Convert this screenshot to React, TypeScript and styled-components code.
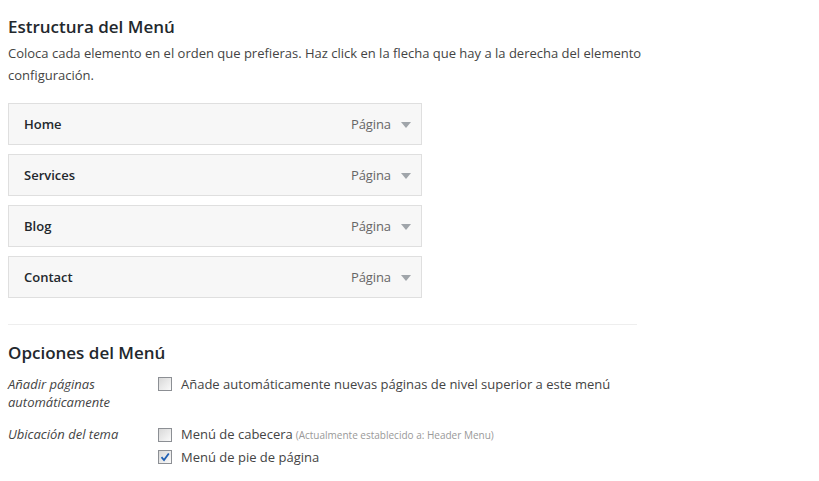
import React from "react";
import styled, { createGlobalStyle } from "styled-components";

const GlobalStyle = createGlobalStyle`
  body {
    margin: 0;
    background: #fff;
    font-family: "Open Sans", "Liberation Sans", sans-serif;
    color: #444;
  }
`;

const Page = styled.div`
  width: 629px;
  padding: 0 8px;
`;

const Heading = styled.h3`
  margin: 15px 0 0;
  font-size: 17px;
  font-weight: 600;
  line-height: 24px;
  color: #23282d;
`;

const Description = styled.p`
  margin: 3px 0 17px;
  font-size: 13px;
  line-height: 22px;
  color: #444;
  white-space: nowrap;
`;

const ItemList = styled.ul`
  list-style: none;
  margin: 0;
  padding: 0;
  display: flex;
  flex-direction: column;
  gap: 9px;
`;

const Item = styled.li`
  height: 40px;
  width: 387px;
  display: flex;
  align-items: center;
  justify-content: space-between;
  padding: 0 10px 0 15px;
  box-sizing: content-box;
  background: #f7f7f7;
  border: 1px solid #dfdfdf;
`;

const ItemTitle = styled.span`
  font-size: 13px;
  font-weight: 600;
  color: #23282d;
`;

const ItemControls = styled.span`
  display: flex;
  align-items: center;
  gap: 10px;
  font-size: 13px;
  letter-spacing: -0.1px;
  color: #666;
`;

const Arrow = styled.span`
  width: 0;
  height: 0;
  border-left: 5px solid transparent;
  border-right: 5px solid transparent;
  border-top: 6px solid #a0a5aa;
  margin: 1px 0 0 0;
`;

const Divider = styled.hr`
  border: 0;
  border-top: 1px solid #eee;
  margin: 26px 0 0;
`;

const OptionsHeading = styled(Heading)`
  margin-top: 16px;
`;

const OptionRow = styled.div<{ $top: number }>`
  display: flex;
  margin-top: ${(p) => p.$top}px;
`;

const OptionLabel = styled.div`
  width: 150px;
  flex-shrink: 0;
  font-size: 13px;
  line-height: 18px;
  font-style: italic;
  color: #444;
`;

const OptionValues = styled.div`
  display: flex;
  flex-direction: column;
  gap: 4px;
`;

const CheckLabel = styled.label`
  display: flex;
  align-items: center;
  gap: 9px;
  font-size: 13px;
  line-height: 18px;
  color: #444;
`;

const Box = styled.span`
  width: 12px;
  height: 12px;
  border: 1px solid #8c8f94;
  background: linear-gradient(135deg, #d8d8d8, #fafafa);
  display: flex;
  align-items: center;
  justify-content: center;
`;

const Note = styled.span`
  font-size: 10px;
  color: #999;
  margin-left: 3px;
`;

const Check = ({ checked }: { checked?: boolean }) => (
  <Box>
    {checked && (
      <svg width="10" height="10" viewBox="0 0 10 10">
        <path d="M1.5 5.2 L4 8 L8.8 1.5" fill="none" stroke="#1e5fb4" strokeWidth="1.8" />
      </svg>
    )}
  </Box>
);

const items = ["Home", "Services", "Blog", "Contact"];

export default function App() {
  return (
    <>
      <GlobalStyle />
      <Page>
        <Heading>Estructura del Menú</Heading>
        <Description>
          Coloca cada elemento en el orden que prefieras. Haz click en la flecha que hay a la derecha del elemento
          <br />
          configuración.
        </Description>
        <ItemList>
          {items.map((name) => (
            <Item key={name}>
              <ItemTitle>{name}</ItemTitle>
              <ItemControls>
                Página
                <Arrow />
              </ItemControls>
            </Item>
          ))}
        </ItemList>
        <Divider />
        <OptionsHeading>Opciones del Menú</OptionsHeading>
        <OptionRow $top={10}>
          <OptionLabel>
            Añadir páginas
            <br />
            automáticamente
          </OptionLabel>
          <OptionValues>
            <CheckLabel>
              <Check />
              Añade automáticamente nuevas páginas de nivel superior a este menú
            </CheckLabel>
          </OptionValues>
        </OptionRow>
        <OptionRow $top={14}>
          <OptionLabel>Ubicación del tema</OptionLabel>
          <OptionValues>
            <CheckLabel>
              <Check />
              <span>
                Menú de cabecera<Note>(Actualmente establecido a: Header Menu)</Note>
              </span>
            </CheckLabel>
            <CheckLabel>
              <Check checked />
              Menú de pie de página
            </CheckLabel>
          </OptionValues>
        </OptionRow>
      </Page>
    </>
  );
}
